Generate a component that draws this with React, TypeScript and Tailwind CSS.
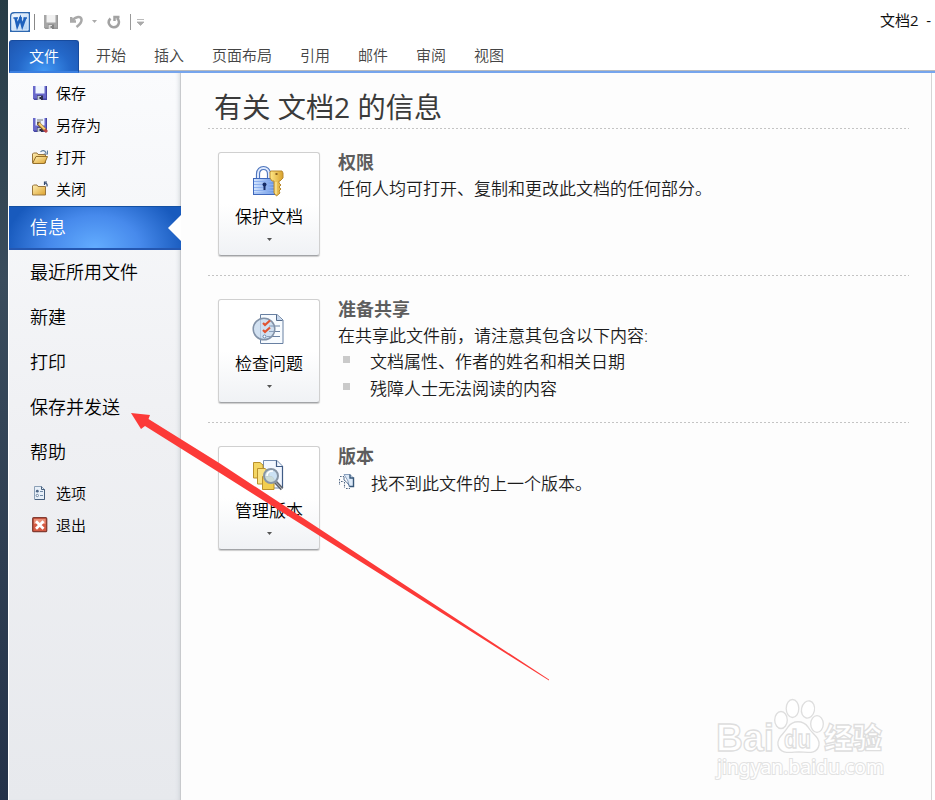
import type { ReactNode } from 'react'

const tabs = ['开始', '插入', '页面布局', '引用', '邮件', '审阅', '视图']
const navItems = ['最近所用文件', '新建', '打印', '保存并发送', '帮助']

function WordLogo() {
  return (
    <svg width="20" height="20" viewBox="0 0 20 20">
      <defs>
        <linearGradient id="logo" x1="0" y1="0" x2="1" y2="1">
          <stop offset="0" stopColor="#fff" />
          <stop offset="1" stopColor="#a9cdf3" />
        </linearGradient>
      </defs>
      <path d="M4 .7H19.3V19.3H.7V4Q.7 .7 4 .7Z" fill="url(#logo)" stroke="#2e68b0" strokeWidth="1.4" />
      <path d="M2 5Q2 2 5 2H18V18H2Z" fill="none" stroke="#dceafa" />
      <path d="M3.4 6H8M9 6H12M13.5 6H17" fill="none" stroke="#1f62bd" strokeWidth="1.4" />
      <path d="M5.5 6L7.3 14L10.3 6.5L12.3 14L15.2 6" fill="none" stroke="#1f62bd" strokeWidth="2.6" />
    </svg>
  )
}

function Floppy({ gray = false, pencil = false }: { gray?: boolean; pencil?: boolean }) {
  const dark = gray ? '#969696' : '#4444a2'
  return (
    <svg width="16" height="16" viewBox="0 0 16 16" className="shrink-0">
      <path d="M1 1H15V15H2.5L1 13.5Z" fill={gray ? '#a6a6a6' : '#6868ca'} />
      <path d="M14 1H15V15H2.5L1 13.5H14Z" fill={dark} />
      <path d="M3.5 1H12.5V8.5H3.5Z" fill={gray ? '#f1f1f1' : '#eef4ff'} />
      {pencil && <path d="M5 3H11M5 5H9" stroke="#777" />}
      <path d="M5 10.5H11V15H5Z" fill={gray ? '#828282' : '#30304f'} />
      <path d="M5.5 11H9V15H5.5Z" fill={gray ? '#ddd' : '#bfc8d8'} />
      <path d="M7.5 12H9V14H7.5Z" fill={gray ? '#888' : '#24243a'} />
      {pencil && (
        <>
          <path d="M6 6L13.5 13.5" stroke="#7c5725" strokeWidth="3.6" />
          <path d="M6.5 6L13.5 13" stroke="#f4cf72" strokeWidth="2.2" />
          <path d="M12.5 12.5L15 15" stroke="#bd4646" strokeWidth="3" />
          <path d="M5 5L7.5 5.5L5.5 7.5Z" fill="#443b36" />
        </>
      )}
    </svg>
  )
}

function Folder({ open = false }: { open?: boolean }) {
  return (
    <svg width="16" height="16" viewBox="0 0 16 16" className="shrink-0">
      <defs>
        <linearGradient id="folder" x1="0" y1="0" x2="1" y2="1">
          <stop offset="0" stopColor="#fff0b5" />
          <stop offset="1" stopColor="#dda22d" />
        </linearGradient>
      </defs>
      <path d="M.5 14V5L1.5 4H5L6 5.5H13.5V14Z" fill="url(#folder)" stroke="#98753e" />
      {open && <path d="M.8 14L4 7.5H15.5L12.5 14.5H1Z" fill="url(#folder)" stroke="#96702b" />}
      {open ? (
        <path d="M8.5 3C10 1 13 1 14 4M15.5 1.5V5H11.8" fill="none" stroke="#607f9f" strokeWidth="1.2" />
      ) : (
        <path d="M15 5.5C15.5 3 14.5 2 12.5 2M12.5 .5V4M12.5 1H15" fill="none" stroke="#354b70" strokeWidth="1.2" />
      )}
    </svg>
  )
}

function OptionsIcon() {
  return (
    <svg width="16" height="16" viewBox="0 0 16 16" className="shrink-0">
      <path d="M2.5 1.5H9.5L12.5 4.5V14.5H2.5Z" fill="#e7eff8" stroke="#8ca0b6" />
      <path d="M9.5 1.5V4.5H12.5V14.5H3" fill="none" stroke="#465f7c" />
      <path d="M8 6.5H11M8 10.5H11" stroke="#718ba8" />
      <circle cx="5.3" cy="6.2" r="1.4" fill="#4d6686" />
      <circle cx="5.3" cy="10.5" r="1.2" fill="#fff" stroke="#6f87a3" />
    </svg>
  )
}

function ExitIcon() {
  return (
    <svg width="16" height="16" viewBox="0 0 16 16" className="shrink-0">
      <rect x=".7" y=".7" width="14" height="14" rx="1" fill="#d55a43" stroke="#833c32" strokeWidth="1.3" />
      <path d="M2 2H13.5V7H2Z" fill="#e98f78" />
      <path d="M4 4.3L11.5 11.7M11.5 4.3L4 11.7" stroke="#fff" strokeWidth="2.8" />
    </svg>
  )
}

function LockIcon() {
  return (
    <svg width="34" height="34" viewBox="0 0 34 34">
      <defs>
        <linearGradient id="lock" x1="0" y1="0" x2="1" y2="0">
          <stop offset="0" stopColor="#d7e8ff" />
          <stop offset="1" stopColor="#6593e4" />
        </linearGradient>
        <linearGradient id="key">
          <stop offset="0" stopColor="#ffe888" />
          <stop offset="1" stopColor="#d8a12b" />
        </linearGradient>
      </defs>
      <path d="M7 14V9C7 1 18 1 18 9V14" fill="none" stroke="#4f76bd" strokeWidth="4.2" />
      <path d="M7 14V9C7 1 18 1 18 9V14" fill="none" stroke="#dfeaff" strokeWidth="2" />
      <rect x="2.5" y="13.5" width="21" height="16" fill="url(#lock)" stroke="#3f68bc" />
      <path d="M3 16.5H23M3 19.5H23M3 22.5H23M3 25.5H23M3 28H23" stroke="#8db0ef" />
      <circle cx="13.5" cy="19.5" r="2" fill="#172d66" />
      <path d="M13.5 19V25" stroke="#172d66" strokeWidth="2" />
      <path d="M20 6H31L32 8V13L29 16H28V18L30 20L28 22L30 24L28 26L29 28L25.5 31L23 28V16H21L19 13V7Z" fill="url(#key)" stroke="#b98a30" />
      <path d="M25 17V29" stroke="#fff0ae" />
      <path d="M24.5 9H26.5" stroke="#8c6220" strokeWidth="2" />
    </svg>
  )
}

function InspectIcon() {
  return (
    <svg width="34" height="34" viewBox="0 0 34 34">
      <path d="M9.5 2.5H26L32 8V31.5H9.5Z" fill="#f7fbff" stroke="#6880a2" />
      <path d="M25.5 3V8.5H31.5" fill="#c4d6ed" stroke="#536a8b" />
      <path d="M20 14H29M20 19.5H29M18 24.5H29" stroke="#6981a3" strokeWidth="1.2" />
      <circle cx="13" cy="17" r="10.8" fill="#c5d8ed" fillOpacity=".78" stroke="#8292a8" strokeWidth="1.5" />
      <path d="M18 14H23M18 19.5H23M16 24.5H20" stroke="#8aa0bd" />
      <path d="M12 11L14 13L19 8.5M12 18L14 20L19 15.5" fill="none" stroke="#e15431" strokeWidth="2.2" />
      <circle cx="13.5" cy="24.5" r="1.5" fill="#fff" stroke="#6584aa" />
    </svg>
  )
}

function VersionsIcon() {
  return (
    <svg width="34" height="34" viewBox="0 0 34 34">
      <path d="M12.5 1.5H26L31.5 7V29H12.5Z" fill="#f2f7ff" stroke="#738baf" />
      <path d="M25.5 1.5V7.5H31.5V29" fill="none" stroke="#405c86" strokeWidth="1.2" />
      <path d="M2.5 3.5H9L12 6V19H2.5Z" fill="#f4d663" stroke="#ba912b" />
      <path d="M6.5 9.5H14L18 13V25H6.5Z" fill="#f9e384" stroke="#ba912b" />
      <path d="M11.5 17.5H21L23 20V30.5H11.5Z" fill="#f2ce4e" stroke="#ba912b" />
      <path d="M24.5 23L31 30" stroke="#61656c" strokeWidth="3.5" />
      <path d="M24.5 23L31 30" stroke="#b5bac0" />
      <circle cx="20" cy="17" r="7" fill="#c6def2" fillOpacity=".85" stroke="#8795a5" strokeWidth="2" />
      <path d="M16 17C16 13 19 12 22 12" fill="none" stroke="#fff" strokeWidth="1.5" />
    </svg>
  )
}

function NoVersionIcon() {
  return (
    <svg width="16" height="16" viewBox="0 0 16 16">
      <path d="M5 1.5H11L14.5 5V13.5H10L9 8Z" fill="#dce9f8" stroke="#8aa0bd" />
      <path d="M11 1.5V5H14.5V13.5H10.5" fill="none" stroke="#385879" strokeWidth="1.4" />
      <path d="M1 3.5H5M.5 6V12M2 8.5H5M5.5 9V15M7 15.5H11" fill="none" stroke="#536985" strokeWidth="1.1" strokeDasharray="1.6 1.2" />
      <path d="M5 4V7L7 8.5L10.5 12.5" fill="none" stroke="#526e91" />
    </svg>
  )
}

function SmallItem({ icon, label }: { icon: ReactNode; label: string }) {
  return (
    <div className="flex h-8 items-center gap-2 pl-[23px] text-[15px] text-black">
      {icon}
      <span>{label}</span>
    </div>
  )
}

function BigButton({ icon, label }: { icon: ReactNode; label: string }) {
  return (
    <button className="flex h-[104px] w-[102px] shrink-0 flex-col items-center rounded-[3px] border border-[#d0d0d0] border-b-[#a2a4a7] bg-linear-to-b from-white from-50% to-[#f0f2f5] pt-3 shadow-[0_1px_1px_#ccc]">
      <span className="-ml-[2px]">{icon}</span>
      <span className="mt-[6px] text-[17px] leading-6 whitespace-nowrap">{label}</span>
      <svg width="5" height="3" className="mt-[9px]">
        <path d="M0 0H5L2.5 3Z" fill="#555" />
      </svg>
    </button>
  )
}

function Divider() {
  return <div className="h-px w-[701px] bg-[repeating-linear-gradient(90deg,#c4c4c4_0_2px,transparent_2px_4px)]" />
}

function Section({ icon, label, title, children }: { icon: ReactNode; label: string; title: string; children: ReactNode }) {
  return (
    <section className="flex h-[146px] gap-[18px] pt-[23px] pl-[10px]">
      <BigButton icon={icon} label={label} />
      <div className="text-[17px] leading-[27px] whitespace-nowrap text-[#1c1c1c]">
        <h2 className="-mt-[3px] text-[18px] leading-[26px] font-bold text-[#5d5d5d]">{title}</h2>
        {children}
      </div>
    </section>
  )
}

function Bullet({ children }: { children: ReactNode }) {
  return (
    <li className="flex h-[27px]">
      <span className="mt-[7px] mr-5 ml-[5px] size-[7px] bg-[#cacaca]" />
      <span className="-mt-px">{children}</span>
    </li>
  )
}

function Toolbar() {
  return (
    <div className="flex h-10 items-center pt-[3px] pl-px">
      <WordLogo />
      <div className="ml-1 h-4 w-px bg-[#888]" />
      <div className="ml-2"><Floppy gray /></div>
      <svg width="14" height="14" viewBox="0 0 14 14" className="ml-[11px]">
        <path d="M1.2 2V6.5H6M2 6C6 1 11 1 11.5 4.5C12 8 9 10 6.5 12" fill="none" stroke="#a9a9a9" strokeWidth="2.5" />
      </svg>
      <svg width="5" height="3" className="ml-2"><path d="M0 0H5L2.5 3Z" fill="#aaa" /></svg>
      <svg width="14" height="14" viewBox="0 0 14 14" className="ml-[10px]">
        <path d="M3.5 3.5C-1 8 4 12.5 7 12.3C12 12 13.5 6 10 3M7.5 6V2H12.5" fill="none" stroke="#a2a2a2" strokeWidth="2.5" />
      </svg>
      <div className="ml-[9px] h-4 w-px bg-[#999]" />
      <svg width="7" height="7" className="mt-[2px] ml-[6px]">
        <path d="M0 .5H7M0 3H7L3.5 6.5Z" fill="#aaa" stroke="#aaa" strokeWidth=".8" />
      </svg>
      <span className="-mt-[2px] ml-auto w-[55px] text-[15px] font-normal whitespace-pre text-[#111]">文档2  -</span>
    </div>
  )
}

function Sidebar() {
  return (
    <aside className="w-[172px] shrink-0 border-r border-[#c8cacd] bg-linear-to-b from-[#fafbfd] via-[#eff0f3] to-[#e7e9ed] pt-1 shadow-[inset_-4px_0_5px_-4px_#c7cbd0]">
      <SmallItem icon={<Floppy />} label="保存" />
      <SmallItem icon={<Floppy pencil />} label="另存为" />
      <SmallItem icon={<Folder open />} label="打开" />
      <SmallItem icon={<Folder />} label="关闭" />
      <div className="mt-px -mr-px flex h-11 items-center justify-between border-t border-b-2 border-t-[#1450a2] border-b-[#2457b1] bg-[radial-gradient(ellipse_90px_65px_at_50%_100%,#63adff,#478aec_50%,#185abd)] pl-[21px] text-[18px] text-white">
        信息
        <svg width="13" height="26"><path d="M13 0V26L0 13Z" fill="#fff" /></svg>
      </div>
      {navItems.map((item) => (
        <div key={item} className="flex h-[45px] items-center pl-[21px] text-[18px] text-black">
          {item}
        </div>
      ))}
      <div className="pt-[2px]">
        <SmallItem icon={<OptionsIcon />} label="选项" />
        <SmallItem icon={<ExitIcon />} label="退出" />
      </div>
    </aside>
  )
}

function Watermark() {
  return (
    <svg width="180" height="90" viewBox="0 0 180 90" className="absolute top-[695px] left-[712px]" fill="#fff" stroke="#dedede" strokeWidth="1.3">
      <text x="4" y="56" fontSize="38" fontWeight="700" textLength="58" lengthAdjust="spacingAndGlyphs" className="font-['Liberation_Sans',sans-serif]">Bai</text>
      <ellipse cx="69" cy="25" rx="6.3" ry="8.5" />
      <ellipse cx="80.5" cy="13.5" rx="6.3" ry="9" />
      <ellipse cx="96" cy="14.5" rx="6.5" ry="8.7" transform="rotate(12 96 14.5)" />
      <ellipse cx="105" cy="29" rx="6.3" ry="8.3" />
      <path d="M76 32C81 25 91 25 96 32C100 39 108 42 107 50C105 60 95 57 87 57C79 57 68 60 66 50C65 42 72 39 76 32Z" />
      <text x="72" y="53" fontSize="25" fontWeight="700" textLength="27" lengthAdjust="spacingAndGlyphs" className="font-['Liberation_Sans',sans-serif]">du</text>
      <text x="112" y="54" fontSize="29" fontWeight="900" textLength="58" lengthAdjust="spacingAndGlyphs">经验</text>
      <text x="5" y="79" fontSize="19" fontWeight="400" textLength="167" lengthAdjust="spacingAndGlyphs" stroke="#e2e2e2" paintOrder="stroke" strokeWidth="2" className="font-['Noto_Sans',sans-serif]">jingyan.baidu.com</text>
    </svg>
  )
}

export default function App() {
  return (
    <div className="relative flex h-[800px] w-[935px] overflow-hidden bg-white font-['Open_Sans','Noto_Sans_CJK_SC',sans-serif] font-[350]">
      <div className="w-2 shrink-0 bg-linear-to-b from-[#273c46] via-[#3a4c5c] via-35% to-[#243249]" />
      <div className="ml-px flex min-w-0 flex-1 flex-col">
        <Toolbar />
        <nav className="flex h-[33px] shrink-0 border-b-2 border-[#76a5ed]">
          <div className="-mb-[2px] flex w-[70px] items-center justify-center rounded-t-[3px] border border-[#174b9e] border-b-2 border-b-[#3b7fe0] bg-[radial-gradient(ellipse_at_bottom,#4197f4,#2468c9_55%,#1e56b0)] text-[15px] text-white">
            文件
          </div>
          <div className="flex flex-1 items-center gap-7 border-b border-[#b7babf] pl-[17px] text-[15px] text-[#444]">
            {tabs.map((tab) => (
              <span key={tab}>{tab}</span>
            ))}
          </div>
        </nav>
        <div className="flex min-h-0 flex-1">
          <Sidebar />
          <main className="w-[751px] border-r border-[#d5d5d5] bg-[#fdfdfd] pl-[27px]">
            <h1 className="flex h-[55px] items-center pt-[13px] pl-[6px] text-[28.2px] font-normal whitespace-nowrap text-[#3b3b3b]">有关 文档2 的信息</h1>
            <Divider />
            <Section icon={<LockIcon />} label="保护文档" title="权限">
              <p>任何人均可打开、复制和更改此文档的任何部分。</p>
            </Section>
            <Divider />
            <Section icon={<InspectIcon />} label="检查问题" title="准备共享">
              <p>在共享此文件前，请注意其包含以下内容:</p>
              <ul>
                <Bullet>文档属性、作者的姓名和相关日期</Bullet>
                <Bullet>残障人士无法阅读的内容</Bullet>
              </ul>
            </Section>
            <Divider />
            <Section icon={<VersionsIcon />} label="管理版本" title="版本">
              <p className="flex gap-4 pt-px pl-px">
                <span className="pt-[3px]"><NoVersionIcon /></span>
                找不到此文件的上一个版本。
              </p>
            </Section>
          </main>
        </div>
      </div>
      <svg width="935" height="800" className="pointer-events-none absolute inset-0">
        <path d="M131 413L150 415L148.5 419L220 463.5L549 679.5V680.5L220 473L145 426L141 429Z" fill="#fc3a38" />
      </svg>
      <Watermark />
    </div>
  )
}
